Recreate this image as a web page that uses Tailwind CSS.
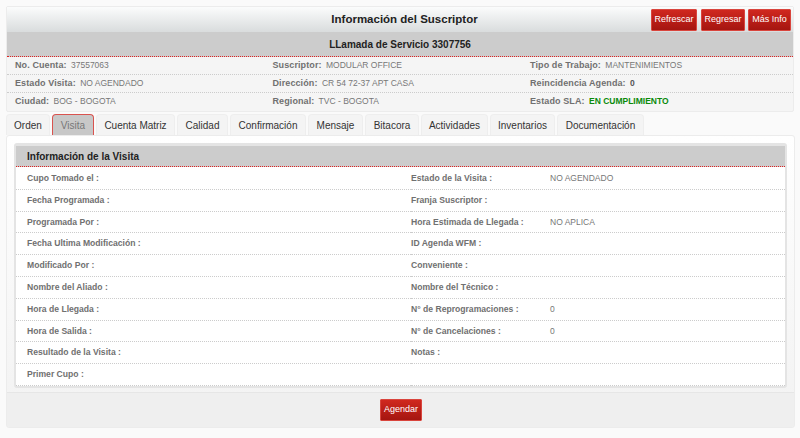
<!DOCTYPE html>
<html lang="en">
<head>
<meta charset="UTF-8">
<title>Información del Suscriptor</title>
<script src="https://cdn.jsdelivr.net/npm/@tailwindcss/browser@4"></script>
</head>
<body class="bg-[#fafafa] font-['Liberation_Sans',Arial,sans-serif] h-[438px] overflow-hidden">
<div class="pt-[6px] pl-[6px] pr-[5px]">
  <div class="mr-[1px] border border-[#ececec] rounded-[2px] bg-[#f5f5f5]">
    <!-- Header -->
    <div class="relative h-[25px] pl-[9px] flex items-center justify-center bg-gradient-to-b from-[#fbfcfc] to-[#d9dcdd]">
      <h1 class="text-[11.5px] font-bold text-[#222]">Información del Suscriptor</h1>
      <div class="absolute right-[2px] top-[2px] flex gap-[3px]">
        <button class="mr-[1px] h-[22px] w-[46px] text-[9px] text-white rounded-[1px] border border-[#d9453d] bg-gradient-to-b from-[#d0281f] to-[#a51510]">Refrescar</button>
        <button class="h-[22px] w-[44px] text-[9px] text-white rounded-[1px] border border-[#d9453d] bg-gradient-to-b from-[#d0281f] to-[#a51510]">Regresar</button>
        <button class="h-[22px] w-[43px] text-[9px] text-white rounded-[1px] border border-[#d9453d] bg-gradient-to-b from-[#d0281f] to-[#a51510]">Más Info</button>
      </div>
    </div>
    <div class="h-[25px] flex items-center justify-center bg-[#cccccc] border-b border-dotted border-[#d22] text-[10px] font-bold text-[#222]">LLamada de Servicio 3307756</div>
    <!-- Datos -->
    <div class="grid grid-cols-[257.5px_257.5px_1fr] pl-[8px] h-[18px] items-center border-b border-dotted border-[#ccc] text-[8.5px] text-[#777]">
      <div><b class="mr-[2px] text-[9px] tracking-[0.1px] text-[#707070]">No. Cuenta:</b> 37557063</div>
      <div><b class="mr-[2px] text-[9px] tracking-[0.1px] text-[#707070]">Suscriptor:</b> MODULAR OFFICE</div>
      <div><b class="mr-[2px] text-[9px] tracking-[0.1px] text-[#707070]">Tipo de Trabajo:</b> MANTENIMIENTOS</div>
    </div>
    <div class="grid grid-cols-[257.5px_257.5px_1fr] pl-[8px] h-[18px] items-center border-b border-dotted border-[#ccc] text-[8.5px] text-[#777]">
      <div><b class="mr-[2px] text-[9px] tracking-[0.1px] text-[#707070]">Estado Visita:</b> NO AGENDADO</div>
      <div><b class="mr-[2px] text-[9px] tracking-[0.1px] text-[#707070]">Dirección:</b> CR 54 72-37 APT CASA</div>
      <div><b class="mr-[2px] text-[9px] tracking-[0.1px] text-[#707070]">Reincidencia Agenda:</b> <b class="text-[#555]">0</b></div>
    </div>
    <div class="grid grid-cols-[257.5px_257.5px_1fr] pl-[8px] h-[18px] items-center text-[8.5px] text-[#777]">
      <div><b class="mr-[2px] text-[9px] tracking-[0.1px] text-[#707070]">Ciudad:</b> BOG - BOGOTA</div>
      <div><b class="mr-[2px] text-[9px] tracking-[0.1px] text-[#707070]">Regional:</b> TVC - BOGOTA</div>
      <div><b class="mr-[2px] text-[9px] tracking-[0.1px] text-[#707070]">Estado SLA:</b> <b class="text-[#0a8a0a]">EN CUMPLIMIENTO</b></div>
    </div>
  </div>

  <!-- Tabs -->
  <div class="flex gap-[2px] mt-[2px] h-[21px] text-[10px] text-[#333] font-medium">
    <div class="w-[44px] flex items-center justify-center bg-[#f4f4f4] border border-b-0 border-[#eee] rounded-t-[4px]">Orden</div>
    <div class="w-[42px] flex items-center justify-center bg-[#c8c8c8] border border-b-0 border-[#d9534f] rounded-t-[4px] text-[#777]">Visita</div>
    <div class="w-[79px] flex items-center justify-center bg-[#f4f4f4] border border-b-0 border-[#eee] rounded-t-[4px]">Cuenta Matriz</div>
    <div class="w-[51px] flex items-center justify-center bg-[#f4f4f4] border border-b-0 border-[#eee] rounded-t-[4px]">Calidad</div>
    <div class="w-[76px] flex items-center justify-center bg-[#f4f4f4] border border-b-0 border-[#eee] rounded-t-[4px]">Confirmación</div>
    <div class="w-[55px] flex items-center justify-center bg-[#f4f4f4] border border-b-0 border-[#eee] rounded-t-[4px]">Mensaje</div>
    <div class="w-[54px] flex items-center justify-center bg-[#f4f4f4] border border-b-0 border-[#eee] rounded-t-[4px]">Bitacora</div>
    <div class="w-[67px] flex items-center justify-center bg-[#f4f4f4] border border-b-0 border-[#eee] rounded-t-[4px]">Actividades</div>
    <div class="w-[65px] flex items-center justify-center bg-[#f4f4f4] border border-b-0 border-[#eee] rounded-t-[4px]">Inventarios</div>
    <div class="w-[87px] flex items-center justify-center bg-[#f4f4f4] border border-b-0 border-[#eee] rounded-t-[4px]">Documentación</div>
  </div>

  <!-- Panel -->
  <div class="border border-[#ececec] rounded-[3px] bg-gradient-to-b from-white to-[#f2f2f2]">
    <div class="pt-[7px] pl-[7px] pr-[7px] pb-[4px]">
      <div class="bg-white border-2 border-t-[3px] border-[#e4e4e4] rounded-[3px]">
        <h2 class="h-[21px] pl-[11px] flex items-center bg-[#cccccc] border-b border-dotted border-[#d22] text-[10px] font-bold text-[#222]">Información de la Visita</h2>
        <div class="mt-[1px] grid grid-cols-[395px_1fr] text-[8.6px] text-[#707070]">
          <div class="h-[21.8px] pl-[11px] flex items-center border-b border-dotted border-[#ccc] font-bold">Cupo Tomado el :</div>
          <div class="h-[21.8px] flex items-center border-b border-dotted border-[#ccc]"><b class="w-[139px]">Estado de la Visita :</b><span class="text-[8.5px] text-[#777]">NO AGENDADO</span></div>
          <div class="h-[21.8px] pl-[11px] flex items-center border-b border-dotted border-[#ccc] font-bold">Fecha Programada :</div>
          <div class="h-[21.8px] flex items-center border-b border-dotted border-[#ccc]"><b class="w-[139px]">Franja Suscriptor :</b></div>
          <div class="h-[21.8px] pl-[11px] flex items-center border-b border-dotted border-[#ccc] font-bold">Programada Por :</div>
          <div class="h-[21.8px] flex items-center border-b border-dotted border-[#ccc]"><b class="w-[139px]">Hora Estimada de Llegada :</b><span class="text-[8.5px] text-[#777]">NO APLICA</span></div>
          <div class="h-[21.8px] pl-[11px] flex items-center border-b border-dotted border-[#ccc] font-bold">Fecha Ultima Modificación :</div>
          <div class="h-[21.8px] flex items-center border-b border-dotted border-[#ccc]"><b class="w-[139px]">ID Agenda WFM :</b></div>
          <div class="h-[21.8px] pl-[11px] flex items-center border-b border-dotted border-[#ccc] font-bold">Modificado Por :</div>
          <div class="h-[21.8px] flex items-center border-b border-dotted border-[#ccc]"><b class="w-[139px]">Conveniente :</b></div>
          <div class="h-[21.8px] pl-[11px] flex items-center border-b border-dotted border-[#ccc] font-bold">Nombre del Aliado :</div>
          <div class="h-[21.8px] flex items-center border-b border-dotted border-[#ccc]"><b class="w-[139px]">Nombre del Técnico :</b></div>
          <div class="h-[21.8px] pl-[11px] flex items-center border-b border-dotted border-[#ccc] font-bold">Hora de Llegada :</div>
          <div class="h-[21.8px] flex items-center border-b border-dotted border-[#ccc]"><b class="w-[139px]">N° de Reprogramaciones :</b><span class="text-[8.5px] text-[#777]">0</span></div>
          <div class="h-[21.8px] pl-[11px] flex items-center border-b border-dotted border-[#ccc] font-bold">Hora de Salida :</div>
          <div class="h-[21.8px] flex items-center border-b border-dotted border-[#ccc]"><b class="w-[139px]">N° de Cancelaciones :</b><span class="text-[8.5px] text-[#777]">0</span></div>
          <div class="h-[21.8px] pl-[11px] flex items-center border-b border-dotted border-[#ccc] font-bold">Resultado de la Visita :</div>
          <div class="h-[21.8px] flex items-center border-b border-dotted border-[#ccc]"><b class="w-[139px]">Notas :</b></div>
          <div class="h-[21.8px] pl-[11px] flex items-center border-b border-dotted border-[#ccc] font-bold">Primer Cupo :</div>
          <div class="h-[21.8px] flex items-center border-b border-dotted border-[#ccc]"></div>
        </div>
      </div>
    </div>

    <!-- Footer -->
    <div class="h-[35px] flex items-center justify-center bg-[#efefef] border-t border-[#e6e6e6] rounded-b-[3px]">
      <button class="mr-[-1px] h-[22px] w-[42px] text-[9px] text-white rounded-[1px] border border-[#d9453d] bg-gradient-to-b from-[#d0281f] to-[#a51510]">Agendar</button>
    </div>
  </div>
</div>
</body>
</html>
